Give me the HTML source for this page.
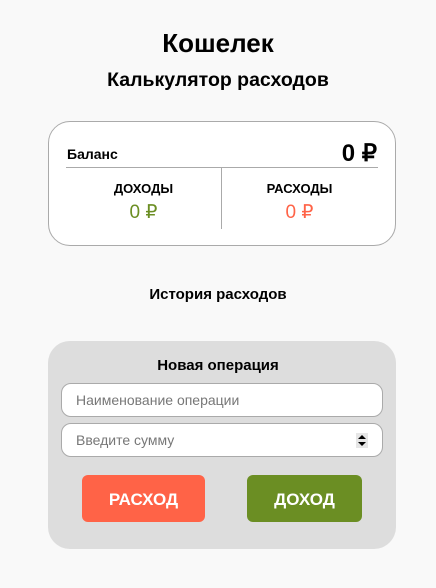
<!DOCTYPE html>
<html><head><meta charset="utf-8"><style>
*{margin:0;padding:0;box-sizing:border-box}
body{width:436px;height:588px;background:#f9f9f9;font-family:"Liberation Sans",sans-serif;position:relative;overflow:hidden;color:#000}
.a{position:absolute}
.c{text-align:center;width:436px;left:0;font-weight:bold}
</style></head><body>
<div class="a c" style="top:27px;font-size:26px;line-height:32px">Кошелек</div>
<div class="a c" style="top:68px;font-size:19.5px;line-height:24px">Калькулятор расходов</div>
<div class="a" style="left:48px;top:121px;width:348px;height:125px;background:#fff;border:1px solid #aaa;border-radius:22px"></div>
<div class="a" style="left:67px;top:145px;font-size:14px;font-weight:bold;line-height:18px">Баланс</div>
<div class="a" style="right:59px;top:140px;font-size:24px;font-weight:bold;line-height:28px">0 ₽</div>
<div class="a" style="left:66px;top:167px;width:312px;height:1px;background:#aaa"></div>
<div class="a" style="left:221px;top:168px;width:1px;height:61px;background:#aaa"></div>
<div class="a" style="left:66px;width:155px;top:181px;text-align:center;font-size:13px;font-weight:bold">ДОХОДЫ</div>
<div class="a" style="left:221px;width:157px;top:181px;text-align:center;font-size:13px;font-weight:bold">РАСХОДЫ</div>
<div class="a" style="left:66px;width:155px;top:201px;text-align:center;font-size:19px;color:#6b8e23">0 ₽</div>
<div class="a" style="left:221px;width:157px;top:201px;text-align:center;font-size:19px;color:#ff6347">0 ₽</div>
<div class="a c" style="top:286px;font-size:15px;line-height:18px">История расходов</div>
<div class="a" style="left:48px;top:341px;width:348px;height:208px;background:#ddd;border-radius:22px"></div>
<div class="a c" style="top:357px;font-size:15px;line-height:18px">Новая операция</div>
<div class="a" style="left:61px;top:383px;width:322px;height:34px;background:#fff;border:1px solid #aaa;border-radius:10px;padding:0 0 0 14px;font-size:14px;line-height:32px;color:#777">Наименование операции</div>
<div class="a" style="left:61px;top:423px;width:322px;height:34px;background:#fff;border:1px solid #aaa;border-radius:10px;padding:0 0 0 14px;font-size:14px;line-height:32px;color:#777">Введите сумму
<svg class="a" style="right:14px;top:9px" width="12" height="15"><rect width="12" height="15" fill="#e6e6e6"/><path d="M2 6L6 2L10 6Z M2 9L10 9L6 13Z" fill="#000"/></svg></div>
<div class="a" style="left:82px;top:475px;width:123px;height:47px;background:#ff6347;border-radius:6px;color:#fff;font-weight:bold;font-size:17px;line-height:49px;text-align:center">РАСХОД</div>
<div class="a" style="left:247px;top:475px;width:115px;height:47px;background:#6b8e23;border-radius:6px;color:#fff;font-weight:bold;font-size:17px;line-height:49px;text-align:center">ДОХОД</div>
</body></html>
